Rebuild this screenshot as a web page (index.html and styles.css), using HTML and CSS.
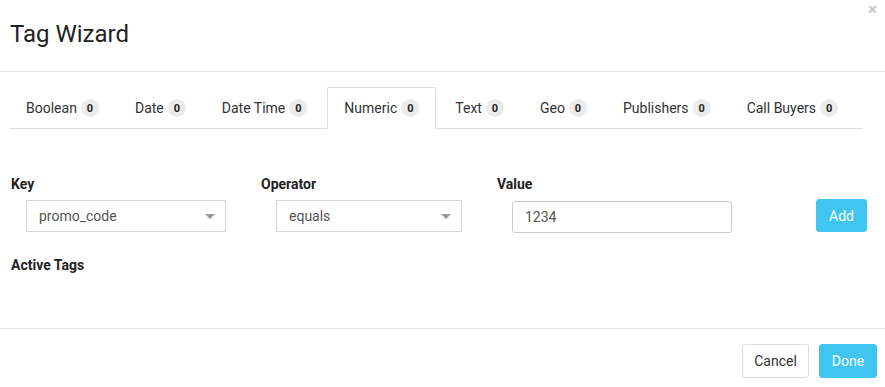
FILE: index.html
```html
<!DOCTYPE html>
<html>
<head>
<meta charset="utf-8">
<link rel="stylesheet" href="styles.css">
</head>
<body>
<div class="modal">
  <div class="modal-header">
    <h1 class="title">Tag Wizard</h1>
    <span class="close">&times;</span>
  </div>
  <div class="modal-body">
    <ul class="tabs">
      <li class="tab">Boolean <span class="badge">0</span></li>
      <li class="tab">Date <span class="badge">0</span></li>
      <li class="tab">Date Time <span class="badge">0</span></li>
      <li class="tab active">Numeric <span class="badge">0</span></li>
      <li class="tab">Text <span class="badge">0</span></li>
      <li class="tab">Geo <span class="badge">0</span></li>
      <li class="tab">Publishers <span class="badge">0</span></li>
      <li class="tab">Call Buyers <span class="badge">0</span></li>
    </ul>
    <div class="form-row">
      <div class="field field-key">
        <label class="label">Key</label>
        <div class="select select-key"><span>promo_code</span><span class="caret"></span></div>
      </div>
      <div class="field field-op">
        <label class="label">Operator</label>
        <div class="select select-op"><span>equals</span><span class="caret"></span></div>
      </div>
      <div class="field field-val">
        <label class="label">Value</label>
        <div class="input">1234</div>
      </div>
      <button class="btn btn-primary btn-add">Add</button>
    </div>
    <div class="label active-tags">Active Tags</div>
  </div>
  <div class="modal-footer">
    <button class="btn btn-default">Cancel</button>
    <button class="btn btn-primary">Done</button>
  </div>
</div>
</body>
</html>
```
FILE: styles.css
```css
* { box-sizing: border-box; }
html, body { margin: 0; padding: 0; background: #fff; }
body {
  font-family: Roboto, "Liberation Sans", sans-serif;
  font-size: 14px;
  color: #333;
}
.modal { width: 885px; height: 387px; }
.modal-header {
  position: relative;
  height: 72px;
  border-bottom: 1px solid #e5e5e5;
  padding: 19px 10px 0;
}
.title {
  margin: 0;
  font-size: 24px;
  font-weight: 400;
  line-height: 30px;
  color: #222;
}
.close {
  position: absolute;
  right: 8px;
  top: 1px;
  font-size: 17px;
  line-height: 17px;
  color: #c8c8c8;
  font-weight: 700;
}
.modal-body { padding: 15px 0 0 10px; height: 256px; }
.tabs {
  list-style: none;
  margin: 0 22px 0 0;
  padding: 0;
  display: flex;
  border-bottom: 1px solid #ddd;
  height: 42px;
}
.tab {
  display: flex;
  align-items: center;
  padding: 0 16px 0 15px;
  margin-right: 3px;
  margin-bottom: -1px;
  border: 1px solid transparent;
  border-radius: 2px 2px 0 0;
  color: #333;
  white-space: pre;
}
.tab.active {
  border-color: #ddd;
  border-bottom-color: #fff;
  background: #fff;
  padding-left: 16px;
}
.badge {
  display: inline-flex;
  align-items: center;
  justify-content: center;
  width: 18px;
  height: 18px;
  margin-left: 0.6px;
  border-radius: 9px;
  background: #ebebeb;
  font-size: 11px;
  font-weight: 700;
  color: #222;
}
.form-row {
  display: flex;
  align-items: flex-start;
  margin-top: 47px;
}
.field { display: flex; flex-direction: column; padding-left: 1px; flex: none; }
.label {
  font-weight: 700;
  font-size: 14px;
  color: #222;
  line-height: 16px;
}
.field .label { margin-bottom: 8px; }
.field-key { width: 250px; }
.field-op { width: 236px; }
.field-val { width: 320px; }
.select {
  margin-left: 15px;
  height: 32px;
  border: 1px solid #d6d6d6;
  display: flex;
  align-items: center;
  justify-content: space-between;
  padding: 0 10px 0 12px;
  color: #555;
  font-size: 14px;
}
.select-key { width: 200px; }
.select-op { width: 186px; }
.caret {
  width: 0; height: 0;
  border-left: 5px solid transparent;
  border-right: 5px solid transparent;
  border-top: 5px solid #999;
}
.input {
  margin-left: 15px;
  margin-top: 1px;
  width: 220px;
  height: 32px;
  border: 1px solid #ccc;
  border-radius: 3px;
  display: flex;
  align-items: center;
  padding-left: 12px;
  color: #555;
  font-size: 14px;
}
.btn {
  font-family: inherit;
  font-size: 14px;
  height: 34px;
  border-radius: 3px;
  border: 1px solid transparent;
  padding: 0 12px;
  cursor: pointer;
}
.btn-primary { background: #3fc5f0; color: #fff; border-color: #3fc5f0; }
.btn-default { background: #fff; color: #333; border-color: #ddd; }
.btn-add { margin-top: 23px; width: 51px; height: 33px; padding: 0; flex: none; }
.active-tags { margin-top: 24px; margin-left: 1px; }
.modal-footer {
  border-top: 1px solid #e5e5e5;
  display: flex;
  justify-content: flex-end;
  gap: 10px;
  padding: 15px 8px 0;
}
.modal-footer .btn-default { width: 67px; padding: 0; }
.modal-footer .btn-primary { width: 58px; padding: 0; }
```
